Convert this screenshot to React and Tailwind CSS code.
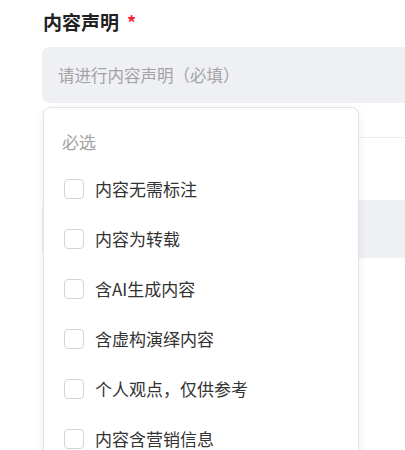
import React from 'react';

const options = [
  '内容无需标注',
  '内容为转载',
  '含AI生成内容',
  '含虚构演绎内容',
  '个人观点，仅供参考',
  '内容含营销信息',
];

const App = () => {
  return (
    <div
      className="relative h-[450px] w-[405px] overflow-hidden bg-white pl-[42px]"
      style={{ fontFamily: '"Noto Sans CJK SC", "Noto Sans", sans-serif' }}
    >
      {/* Label */}
      <div className="flex h-[44px] items-center pl-px pt-[1px] text-[19px] font-bold text-[#222]">
        内容声明
        <span className="ml-[8px] text-[18px] text-[#f5222d]">*</span>
      </div>

      {/* Input */}
      <div className="mt-[3px] flex h-[56px] w-[420px] items-center rounded-lg bg-[#eff0f4] pl-[16px] text-[16.5px] text-[#a3a3a3]">
        请进行内容声明（必填）
      </div>

      {/* Content behind the dropdown */}
      <div className="mt-[34px] h-px w-[420px] bg-[#eeeeee]" />
      <div className="mt-[62px] h-[58px] w-[420px] rounded-lg bg-[#eff0f4]" />

      {/* Dropdown */}
      <div className="absolute left-[43px] top-[107px] w-[316px] rounded-lg border border-[#e4e4e4] bg-white pb-[20px] pt-[24px] shadow-[0_2px_8px_rgba(0,0,0,0.08)]">
        <div className="pl-[18px] text-[17px] leading-[20px] text-[#a3a3a3]">必选</div>
        <div className="mt-[12px] flex flex-col">
          {options.map((opt) => (
            <div key={opt} className="flex h-[50px] items-center pl-[20px]">
              <div className="h-[20px] w-[20px] rounded-[4px] border border-[#d4d4d4] bg-white" />
              <span className="ml-[11px] text-[17px] text-[#333]">{opt}</span>
            </div>
          ))}
        </div>
      </div>
    </div>
  );
};

export default App;
